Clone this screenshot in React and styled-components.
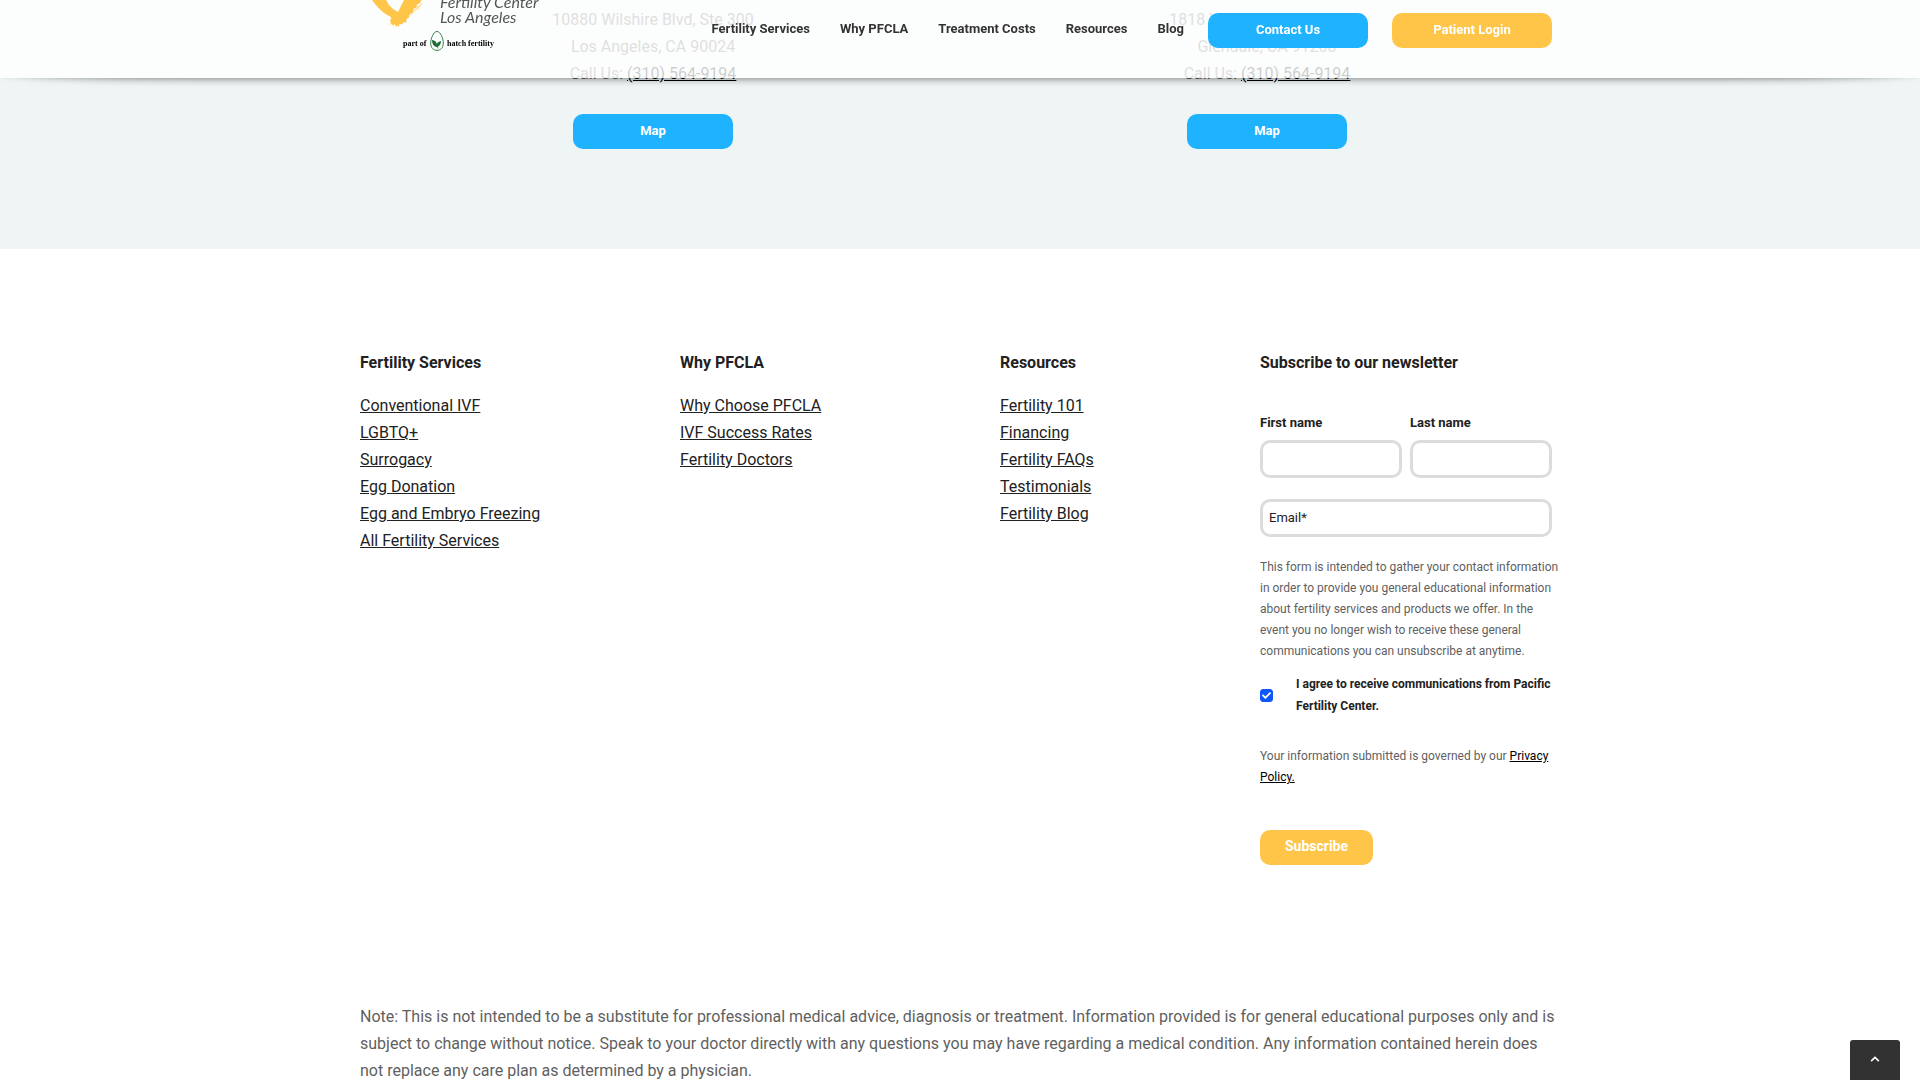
import React from "react";
import styled, { createGlobalStyle, css } from "styled-components";
import { FaCheck, FaChevronUp } from "react-icons/fa";

const GlobalStyle = createGlobalStyle`
  * {
    box-sizing: border-box;
  }

  body {
    margin: 0;
    background-color: white;
    color: #5f5f5f;
    font-family: Roboto, "Liberation Sans", sans-serif;
    font-size: 16px;
    line-height: 27px;
    overflow: hidden;
  }
`;

const Header = styled.header`
  position: fixed;
  top: 0;
  left: 0;
  right: 0;
  z-index: 1;
  height: 78px;
  background-color: rgb(255 255 255 / 80%);

  /* curved shadow that fades out towards both sides */
  &::after {
    content: "";
    position: absolute;
    inset: 0;
    z-index: -1;
    border-radius: 200px / 8px;
    box-shadow: 0 0 8px 0 rgb(0 0 0 / 60%);
    clip-path: inset(100% 0 -20px 0);
    pointer-events: none;
  }
`;

const HeaderInner = styled.div`
  display: flex;
  align-items: flex-start;
  justify-content: space-between;
  max-width: 1200px;
  margin: 0 auto;
  padding: 0 8px;
`;

const Logo = styled.svg`
  display: block;
  width: 176px;
  height: 54px;
`;

const Actions = styled.div`
  display: flex;
  gap: 24px;
  padding-top: 13px;
`;

const Nav = styled.nav`
  display: flex;
  gap: 30px;
  line-height: 31px;
`;

const NavLink = styled.a`
  color: #333333;
  font-size: 13px;
  font-weight: bold;
  text-decoration: none;
`;

const buttonStyle = css`
  display: block;
  width: 160px;
  height: 35px;
  padding: 0 0 2px;
  border: 0;
  border-radius: 10px;
  background-color: ${(props) => (props.$primary ? "#1eb2ff" : "#ffc548")};
  color: white;
  font-family: inherit;
  font-size: 13px;
  font-weight: bold;
  line-height: 33px;
  text-align: center;
  text-decoration: none;
`;

const ButtonLink = styled.a`
  ${buttonStyle}
`;

const Offices = styled.section`
  background-color: #eff5f5;
`;

const OfficesInner = styled.div`
  display: grid;
  grid-template-columns: 1fr 1fr;
  max-width: 1228px;
  margin: 0 auto;
  padding: 6px 0 100px;
`;

const Office = styled.div`
  display: flex;
  flex-direction: column;
  align-items: center;
  gap: 27px;
`;

const Address = styled.address`
  font-style: normal;
  text-align: center;

  a {
    color: black;
  }
`;

const Footer = styled.footer`
  max-width: 1200px;
  margin: 0 auto;
  padding-top: 100px;
`;

const Columns = styled.div`
  display: grid;
  grid-template-columns: 320fr 320fr 260fr 300fr;
`;

const Title = styled.h2`
  margin: 0 0 16px;
  color: #212121;
  font-size: 16px;
  font-weight: bold;
  line-height: 27px;
`;

const LinkList = styled.ul`
  margin: 0;
  padding: 0;
  list-style: none;

  a {
    color: #212121;
  }
`;

const Form = styled.form`
  display: flex;
  flex-direction: column;
  padding-top: 17px;
`;

const Fields = styled.div`
  display: grid;
  grid-template-columns: 1fr 1fr;
  gap: 21px 8px;
  padding-right: 8px;
`;

const Field = styled.label`
  display: flex;
  flex-direction: column;
  gap: 4px;
  grid-column: ${(props) => (props.$wide ? "span 2" : "auto")};
  color: #212121;
  font-size: 13px;
  font-weight: bold;
`;

const TextInput = styled.input`
  width: 100%;
  height: 38px;
  padding: 0 6px 2px;
  border: 3px solid #dcdcdc;
  border-radius: 10px;
  background-color: white;
  color: #212121;
  font-family: inherit;
  font-size: 13px;

  &::placeholder {
    color: #212121;
    opacity: 1;
  }
`;

const SmallText = styled.p`
  margin: ${(props) => (props.$policy ? "29px 0 42px" : "20px 0 11px")};
  font-size: 12px;
  line-height: 21px;

  a {
    color: black;
  }
`;

const Agree = styled.label`
  display: flex;
  align-items: center;
  gap: 23px;
  color: #212121;
  font-size: 12px;
  font-weight: bold;
  line-height: 22px;
`;

const CheckWrap = styled.span`
  display: grid;
  place-items: center;
  flex: none;
  width: 13px;
  height: 13px;

  > * {
    grid-area: 1 / 1;
  }

  svg {
    pointer-events: none;
  }
`;

const Checkbox = styled.input`
  appearance: none;
  width: 13px;
  height: 13px;
  margin: 0;
  border: 1px solid #767676;
  border-radius: 3px;

  &:checked {
    border-color: #0b57f7;
    background-color: #0b57f7;
  }
`;

const SubmitButton = styled.button`
  ${buttonStyle}
  width: 113px;
  font-size: 14px;
`;

const Note = styled.p`
  margin: 0;
  padding: 138px 0 40px;
`;

const TopButton = styled.button`
  position: fixed;
  right: 20px;
  bottom: 0;
  display: flex;
  align-items: center;
  justify-content: center;
  width: 50px;
  height: 40px;
  padding: 0 0 2px;
  border: 0;
  border-radius: 3px 3px 0 0;
  background-color: #323232;
  color: white;
`;

const navItems = [
  "Fertility Services",
  "Why PFCLA",
  "Treatment Costs",
  "Resources",
  "Blog",
];

const offices = [
  { street: "10880 Wilshire Blvd, Ste 300", city: "Los Angeles, CA 90024" },
  { street: "1818 Verdugo Blvd, Ste 300", city: "Glendale, CA 91208" },
];

const linkColumns = [
  {
    title: "Fertility Services",
    links: [
      "Conventional IVF",
      "LGBTQ+",
      "Surrogacy",
      "Egg Donation",
      "Egg and Embryo Freezing",
      "All Fertility Services",
    ],
  },
  {
    title: "Why PFCLA",
    links: ["Why Choose PFCLA", "IVF Success Rates", "Fertility Doctors"],
  },
  {
    title: "Resources",
    links: [
      "Fertility 101",
      "Financing",
      "Fertility FAQs",
      "Testimonials",
      "Fertility Blog",
    ],
  },
];

function LogoImage() {
  return (
    <Logo viewBox="0 0 176 54" role="img" aria-label="Fertility Center Los Angeles">
      <path
        d="M4 0 L7 4 L11 8.5 L16 13 L23.5 17.5 L22 21 L23 22 L22 25 L24 23.5 L24.5 26 L26.5 24 L28 26.5 L29.5 25.5 L31 27 L31.5 24 L34 24.5 L36 22 L38 23 L38.5 19 L41 17.5 L41.5 14.5 L45 12 L45.5 9 L49 7 L48.5 5 L52 3 L53.5 0 L36 0 L33 6 L30 12 L25 9 L21 5 L18 0 Z"
        fill="#ffc548"
      />
      <path
        d="M43 15 L51 5.5 M49 10 L54 3"
        fill="none"
        stroke="#ffc548"
        strokeWidth="0.7"
      />
      <g
        fill="#555555"
        fontFamily="Lato, sans-serif"
        fontSize="16"
        fontStyle="italic"
      >
        <text x="72" y="8">Fertility Center</text>
        <text x="72" y="23">Los Angeles</text>
      </g>
      <g
        fill="black"
        fontFamily="'Liberation Serif', serif"
        fontSize="8"
        fontWeight="bold"
      >
        <text x="35" y="46">part of</text>
        <text x="79" y="46">hatch fertility</text>
      </g>
      <path
        d="M69 31.5 C65.5 31.5 62.7 38.5 62.7 43 C62.7 48 65.5 50.3 69 50.3 C72.5 50.3 75.3 48 75.3 43 C75.3 38.5 72.5 31.5 69 31.5 Z"
        fill="none"
        stroke="#2f7d43"
      />
      <path
        d="M64 40 C66 40 68 41 69 44 C69.5 42 71 41.5 73 41 C73 44 71.5 46 70 46.5 L70.5 49 L69 47 C66 47 64 44 64 40 Z"
        fill="#1f6e33"
      />
    </Logo>
  );
}

function NewsletterForm() {
  return (
    <Form onSubmit={(e) => e.preventDefault()}>
      <Fields>
        <Field>
          First name
          <TextInput type="text" name="firstname" />
        </Field>
        <Field>
          Last name
          <TextInput type="text" name="lastname" />
        </Field>
        <Field $wide>
          <TextInput
            type="email"
            name="email"
            placeholder="Email*"
            aria-label="Email"
          />
        </Field>
      </Fields>
      <SmallText>
        This form is intended to gather your contact information in order to
        provide you general educational information about fertility services and
        products we offer. In the event you no longer wish to receive these
        general communications you can unsubscribe at anytime.
      </SmallText>
      <Agree>
        <CheckWrap>
          <Checkbox type="checkbox" name="agree" defaultChecked />
          <FaCheck size={9} color="white" />
        </CheckWrap>
        <span>
          I agree to receive communications from Pacific Fertility Center.
        </span>
      </Agree>
      <SmallText $policy>
        Your information submitted is governed by our{" "}
        <a href="#privacy">Privacy Policy.</a>
      </SmallText>
      <SubmitButton type="submit">Subscribe</SubmitButton>
    </Form>
  );
}

export default function App() {
  return (
    <>
      <GlobalStyle />
      <Header>
        <HeaderInner>
          <LogoImage />
          <Actions>
            <Nav>
              {navItems.map((item) => (
                <NavLink key={item} href="#">
                  {item}
                </NavLink>
              ))}
            </Nav>
            <ButtonLink href="#contact" $primary>
              Contact Us
            </ButtonLink>
            <ButtonLink href="#login">Patient Login</ButtonLink>
          </Actions>
        </HeaderInner>
      </Header>
      <main>
        <Offices>
          <OfficesInner>
            {offices.map(({ street, city }) => (
              <Office key={street}>
                <Address>
                  {street}
                  <br />
                  {city}
                  <br />
                  Call Us: <a href="tel:3105649194">(310) 564-9194</a>
                </Address>
                <ButtonLink href="#map" $primary>
                  Map
                </ButtonLink>
              </Office>
            ))}
          </OfficesInner>
        </Offices>
      </main>
      <Footer>
        <Columns>
          {linkColumns.map(({ title, links }) => (
            <div key={title}>
              <Title>{title}</Title>
              <LinkList>
                {links.map((link) => (
                  <li key={link}>
                    <a href="#">{link}</a>
                  </li>
                ))}
              </LinkList>
            </div>
          ))}
          <div>
            <Title>Subscribe to our newsletter</Title>
            <NewsletterForm />
          </div>
        </Columns>
        <Note>
          Note: This is not intended to be a substitute for professional medical
          advice, diagnosis or treatment. Information provided is for general
          educational purposes only and is subject to change without notice.
          Speak to your doctor directly with any questions you may have
          regarding a medical condition. Any information contained herein does
          not replace any care plan as determined by a physician.
        </Note>
      </Footer>
      <TopButton type="button" aria-label="Back to top">
        <FaChevronUp size={10} />
      </TopButton>
    </>
  );
}
